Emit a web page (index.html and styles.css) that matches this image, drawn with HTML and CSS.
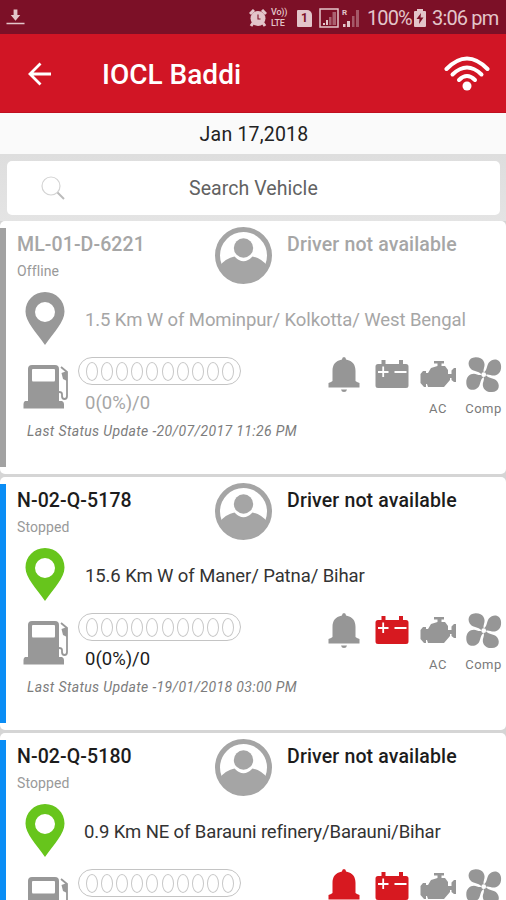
FILE: index.html
```html
<!DOCTYPE html>
<html lang="en">
<head>
<meta charset="utf-8">
<title>IOCL Baddi</title>
<link rel="stylesheet" href="styles.css">
</head>
<body>
<svg class="sprite" aria-hidden="true">
  <symbol id="avatar" viewBox="0 0 57 57"><circle cx="28.500" cy="28.500" r="26" fill="#fff" stroke="currentColor" stroke-width="5"/><circle cx="28.500" cy="21" r="9.700" fill="currentColor"/><path d="M4 39.500Q11 31 19.500 29.500Q28.500 39 37.500 29.500Q46 31 53 39.500Q46 56 28.500 56T4 39.500Z" fill="currentColor"/></symbol>
  <symbol id="pin" viewBox="0 0 40 53"><path fill="currentColor" fill-rule="evenodd" d="M20 0C9 0 .5 8.500 .5 19.500C.5 30 11 40 20 53C29 40 39.500 30 39.500 19.500C39.500 8.500 31 0 20 0ZM20 10a10 10 0 1 1 0 20a10 10 0 0 1 0-20Z"/></symbol>
  <symbol id="fuel" viewBox="0 0 46 45"><path fill="currentColor" fill-rule="evenodd" d="M9 1H32Q36 1 36 5V37H39Q41 38 41 40V44.500H.5V40Q.5 38 2 37H5V5Q5 1 9 1ZM10 5Q9 5 9 6V16Q9 17.500 10 17.500H31Q32 17.500 32 16V6Q32 5 31 5Z"/><path fill="none" stroke="currentColor" stroke-width="1.800" d="M38 3L44 8V32Q44 35 41.500 35Q39 35 39 32V30Q39 28 36 28"/><path fill="currentColor" d="M38.500 9L44 7V17L40 15Z"/></symbol>
  <symbol id="bell" viewBox="0 0 32 36"><path fill="currentColor" d="M14 2.500Q14 0 16 0T18 2.500C25 4 27.500 8 27.500 14V24Q28.500 25 31.500 26V30.500H.5V26Q3.500 25 4.500 24V14C4.500 8 7 4 14 2.500ZM13 32.500H19Q18.500 35 16 35T13 32.500Z"/></symbol>
  <symbol id="battery" viewBox="0 0 34 28"><path fill="currentColor" d="M3 4H6.500V0H10.500V4H24V0H28V4H31Q33.500 4 33.500 6.500V25.500Q33.500 28 31 28H3Q.5 28 .5 25.500V6.500Q.5 4 3 4Z"/><path stroke="#fff" stroke-width="1.800" d="M3 12H13.500M8.200 6.500V17M19.500 12H31.500"/></symbol>
  <symbol id="engine" viewBox="0 0 36 27"><path fill="currentColor" d="M14 0H24V2.500H21.500V5H25L28 9V13H31.500V9.500L34 7H36V21H34L31.500 19V17H30V19L24 26H8L7 23H6V26H4L.5 22V13L3 10H6V12H8L11 7L17.500 5V2.500H14Z"/></symbol>
  <symbol id="fan" viewBox="0 0 36 36"><g fill="currentColor"><path id="blade" d="M16 18.500C14 14 9 15 5.500 12.500C.5 8 2 .5 9.500 .3C17 0 20 6 18 11C17 14 17.500 15 18.500 17Z"/><use href="#blade" transform="rotate(90 17.700 17.700)"/><use href="#blade" transform="rotate(180 17.700 17.700)"/><use href="#blade" transform="rotate(270 17.700 17.700)"/></g><circle cx="17.700" cy="17.700" r="2.400" fill="#fff"/></symbol>
</svg>

<header class="status">
  <svg class="download" viewBox="0 0 20 18"><path fill="currentColor" d="M8 1H12V7H15L10 13L5 7H8ZM.5 15H19.500V16.500H.5Z"/></svg>
  <div class="status-right">
    <svg class="alarm" viewBox="0 0 18 18"><circle cx="9" cy="9.500" r="7.500" fill="currentColor"/><path stroke="currentColor" stroke-width="3" d="M1 5L5 1M13 1L17 5M4 14L2 17M14 14L16 17"/><path fill="none" stroke="#7c1027" stroke-width="1.100" d="M9 5.500V10H11.500"/></svg>
    <span class="volte"><span>Vo))</span><span>LTE</span></span>
    <span class="sim">1</span>
    <svg class="signal" viewBox="0 0 20 20"><path fill="none" stroke="currentColor" stroke-width="1.500" d="M1 1H19V19H1Z"/><path fill="currentColor" d="M4 17V15H6V17ZM7 17V12H9V17Z"/><path fill="currentColor" opacity=".45" d="M10 17V9H12.500V17ZM13.500 17V4H17V17Z"/></svg>
    <span class="roaming"><span>R</span><svg viewBox="0 0 18 19"><path fill="currentColor" d="M1 18V15H3.500V18ZM5 18V12H8V18Z"/><path fill="currentColor" opacity=".4" d="M10 18V7H12.500V18ZM14 18V1H17V18Z"/></svg></span>
    <span class="percent">100%</span>
    <svg class="charge" viewBox="0 0 12 18"><path fill="currentColor" d="M3 2V0H9V2H11Q12 2 12 3V17Q12 18 11 18H1Q0 18 0 17V3Q0 2 1 2Z"/><path fill="#7c1027" d="M7 4L2.500 10H5.500L5 15L9.500 8.500H6.500Z"/></svg>
    <span class="time">3:06 pm</span>
  </div>
</header>

<nav class="appbar">
  <svg class="back" viewBox="0 0 24 24"><path fill="none" stroke="#fff" stroke-width="2.800" d="M23 12H2M12.500 1.500L2 12L12.500 22.500"/></svg>
  <h1 class="title">IOCL Baddi</h1>
  <svg class="wifi" viewBox="0 0 46 35"><g fill="none" stroke="#fff" stroke-linecap="round" stroke-width="4"><path d="M2.500 13Q23-8 43.500 13"/><path d="M8.500 18.500Q23 4.500 37.500 18.500"/><path d="M15 24Q23 16 31 24"/></g><circle cx="23" cy="30" r="4.500" fill="#fff"/></svg>
</nav>
<div class="date"><span>Jan 17,2018</span></div>
<div class="search-wrap">
  <div class="search">
    <svg class="glass" viewBox="0 0 24 24"><circle cx="10" cy="10" r="9" fill="none" stroke="#d4d4d4" stroke-width="1.200"/><path stroke="#bbb" stroke-width="2" d="M16.500 16.500L23 23"/></svg>
    <span class="search-text">Search Vehicle</span>
  </div>
</div>

<main class="list">
  <article class="card offline">
    <div class="bar"></div>
    <div class="body">
      <div class="head">
        <div class="ident"><div class="plate">ML-01-D-6221</div><div class="state">Offline</div></div>
        <svg class="avatar"><use href="#avatar"/></svg>
        <div class="driver">Driver not available</div>
      </div>
      <div class="place"><svg class="pin"><use href="#pin"/></svg><span class="addr">1.5 Km W of Mominpur/ Kolkotta/ West Bengal</span></div>
      <div class="stats">
        <svg class="fuel"><use href="#fuel"/></svg>
        <div class="level"><div class="pill"><i></i><i></i><i></i><i></i><i></i><i></i><i></i><i></i><i></i><i></i></div><div class="amount">0(0%)/0</div></div>
        <div class="icons">
          <div class="cell"><svg class="bell"><use href="#bell"/></svg></div>
          <div class="cell"><svg class="battery"><use href="#battery"/></svg></div>
          <div class="cell"><svg class="engine"><use href="#engine"/></svg><span class="label">AC</span></div>
          <div class="cell"><svg class="fan"><use href="#fan"/></svg><span class="label">Comp</span></div>
        </div>
      </div>
      <div class="update">Last Status Update -20/07/2017 11:26 PM</div>
    </div>
  </article>

  <article class="card">
    <div class="bar"></div>
    <div class="body">
      <div class="head">
        <div class="ident"><div class="plate">N-02-Q-5178</div><div class="state">Stopped</div></div>
        <svg class="avatar"><use href="#avatar"/></svg>
        <div class="driver">Driver not available</div>
      </div>
      <div class="place"><svg class="pin"><use href="#pin"/></svg><span class="addr">15.6 Km W of Maner/ Patna/ Bihar</span></div>
      <div class="stats">
        <svg class="fuel"><use href="#fuel"/></svg>
        <div class="level"><div class="pill"><i></i><i></i><i></i><i></i><i></i><i></i><i></i><i></i><i></i><i></i></div><div class="amount">0(0%)/0</div></div>
        <div class="icons">
          <div class="cell"><svg class="bell"><use href="#bell"/></svg></div>
          <div class="cell"><svg class="battery alert"><use href="#battery"/></svg></div>
          <div class="cell"><svg class="engine"><use href="#engine"/></svg><span class="label">AC</span></div>
          <div class="cell"><svg class="fan"><use href="#fan"/></svg><span class="label">Comp</span></div>
        </div>
      </div>
      <div class="update">Last Status Update -19/01/2018 03:00 PM</div>
    </div>
  </article>

  <article class="card cut">
    <div class="bar"></div>
    <div class="body">
      <div class="head">
        <div class="ident"><div class="plate">N-02-Q-5180</div><div class="state">Stopped</div></div>
        <svg class="avatar"><use href="#avatar"/></svg>
        <div class="driver">Driver not available</div>
      </div>
      <div class="place"><svg class="pin"><use href="#pin"/></svg><span class="addr long">0.9 Km NE of Barauni refinery/Barauni/Bihar</span></div>
      <div class="stats">
        <svg class="fuel"><use href="#fuel"/></svg>
        <div class="level"><div class="pill"><i></i><i></i><i></i><i></i><i></i><i></i><i></i><i></i><i></i><i></i></div></div>
        <div class="icons">
          <div class="cell"><svg class="bell alert"><use href="#bell"/></svg></div>
          <div class="cell"><svg class="battery alert"><use href="#battery"/></svg></div>
          <div class="cell"><svg class="engine"><use href="#engine"/></svg></div>
          <div class="cell"><svg class="fan"><use href="#fan"/></svg></div>
        </div>
      </div>
    </div>
  </article>
</main>
</body>
</html>
```
FILE: styles.css
```css
* { box-sizing: border-box; }
body { margin: 0; width: 506px; height: 900px; overflow: hidden; background: #e1e1e1; font-family: Roboto, sans-serif; color: #222; white-space: nowrap; display: flex; flex-direction: column; }
svg { display: block; flex: none; }
.sprite { display: none; }

.status { flex: none; height: 34px; background: #7c1027; color: #e3c5ca; display: flex; justify-content: space-between; align-items: center; padding: 2px 8px 0 6px; }
.download { width: 19px; height: 18px; margin-top: -2px; }
.status-right { display: flex; align-items: center; }
.alarm { width: 18px; height: 18px; margin-right: 4px; }
.volte { display: flex; flex-direction: column; width: 18px; margin-right: 8px; font-size: 9px; font-weight: 500; line-height: 11px; letter-spacing: -.2px; }
.sim { width: 15px; height: 17px; margin-right: 7px; background: #e3c5ca; color: #7c1027; border-radius: 1px 5px 1px 1px; font-size: 12px; font-weight: 700; line-height: 17px; text-align: center; }
.signal { width: 20px; height: 20px; margin-right: 3px; }
.roaming { display: flex; width: 18px; margin-right: 7px; font-size: 8px; font-weight: 700; line-height: 8px; }
.roaming span { width: 6px; margin-right: -6px; }
.roaming svg { width: 18px; height: 19px; }
.percent { width: 43px; font-size: 20px; letter-spacing: -.9px; margin-right: 4px; }
.charge { width: 12px; height: 18px; margin-right: 6px; }
.time { width: 66px; font-size: 20px; letter-spacing: -.85px; }

.appbar { flex: none; height: 79px; background: #d11525; display: flex; align-items: center; padding: 0 16px 0 28px; border-bottom: 1px solid #c01020; }
.back { width: 24px; height: 24px; margin-top: 1px; }
.title { margin: 3px 0 0 50px; flex: 1; color: #fff; font-size: 28px; font-weight: 500; }
.wifi { width: 46px; height: 35px; }

.date { flex: none; height: 41px; background: #fafafa; display: flex; align-items: center; justify-content: center; font-size: 19.500px; letter-spacing: .2px; padding: 2px 0 0 2px; }
.search-wrap { flex: none; height: 67px; padding: 7px 6px 6px 7px; background: linear-gradient(#dedede, #e4e4e4); }
.search { height: 54px; background: #fff; border-radius: 5px; display: flex; align-items: center; padding-left: 34px; }
.glass { width: 24px; height: 24px; }
.search-text { margin: 1px 0 0 124px; font-size: 19.500px; letter-spacing: .07px; color: #626262; }

.list { flex: 1; min-height: 0; overflow: hidden; display: flex; flex-direction: column; gap: 3px; background: #d5d5d5; }
.card { flex: none; height: 253px; display: flex; background: #fff; border-radius: 5px; color: #1c1c1c; }
.cut { height: 167px; overflow: hidden; border-radius: 5px 5px 0 0; }
.bar { flex: none; width: 6px; margin: 7px 0; background: #0a8df5; }
.cut .bar { margin-bottom: 0; }
.body { flex: 1; min-width: 0; padding-top: 6px; }
.head { display: flex; height: 65px; padding-left: 11px; }
.ident { width: 198px; }
.plate { margin-top: 6px; font-size: 19.500px; font-weight: 500; line-height: 24px; letter-spacing: .1px; }
.state { margin-top: 5px; font-size: 14px; line-height: 18px; color: #999; letter-spacing: .1px; }
.avatar { width: 57px; height: 57px; color: #a5a5a5; }
.driver { margin: 6px 0 0 15px; font-size: 19.500px; font-weight: 500; line-height: 24px; letter-spacing: .15px; }
.place { display: flex; height: 64px; padding-left: 19px; }
.pin { width: 40px; height: 53px; color: #67c51c; }
.addr { margin: 17px 0 0 20px; font-size: 18.500px; line-height: 22px; letter-spacing: -.1px; color: #333; }
.addr.long { margin-left: 19px; letter-spacing: -.12px; }
.stats { display: flex; height: 62px; padding-left: 17px; }
.fuel { width: 46px; height: 45px; margin-top: 8px; color: #989898; }
.level { width: 250px; padding-left: 9px; }
.pill { width: 163px; height: 28px; margin-top: 1px; border: 1px solid #c4c4c4; border-radius: 14px; display: flex; align-items: center; justify-content: space-between; padding: 0 6px 0 7px; }
.pill i { width: 12px; height: 19px; border: 1px solid #c8c8c8; border-radius: 50%; }
.amount { margin: 7px 0 0 7px; font-size: 18.500px; line-height: 22px; }
.icons { display: grid; grid-template-columns: 49px 47px 46px 45px; padding-top: 1px; }
.cell { display: flex; flex-direction: column; align-items: center; height: 60px; color: #969696; }
.bell { width: 32px; height: 36px; }
.battery { width: 34px; height: 28px; margin-top: 3px; }
.engine { width: 36px; height: 27px; margin-top: 4px; }
.fan { width: 36px; height: 36px; }
.label { margin-top: auto; font-size: 13px; line-height: 16px; letter-spacing: .5px; color: #7a7a7a; }
.alert { color: #d71920; }
.update { margin: 3px 0 0 21px; font-size: 14px; line-height: 20px; font-style: italic; color: #7c7c7c; letter-spacing: .37px; }

.offline, .offline .addr { color: #a6a6a6; }
.offline .bar { background: #a2a2a2; }
.offline .pin { color: #989898; }
```
